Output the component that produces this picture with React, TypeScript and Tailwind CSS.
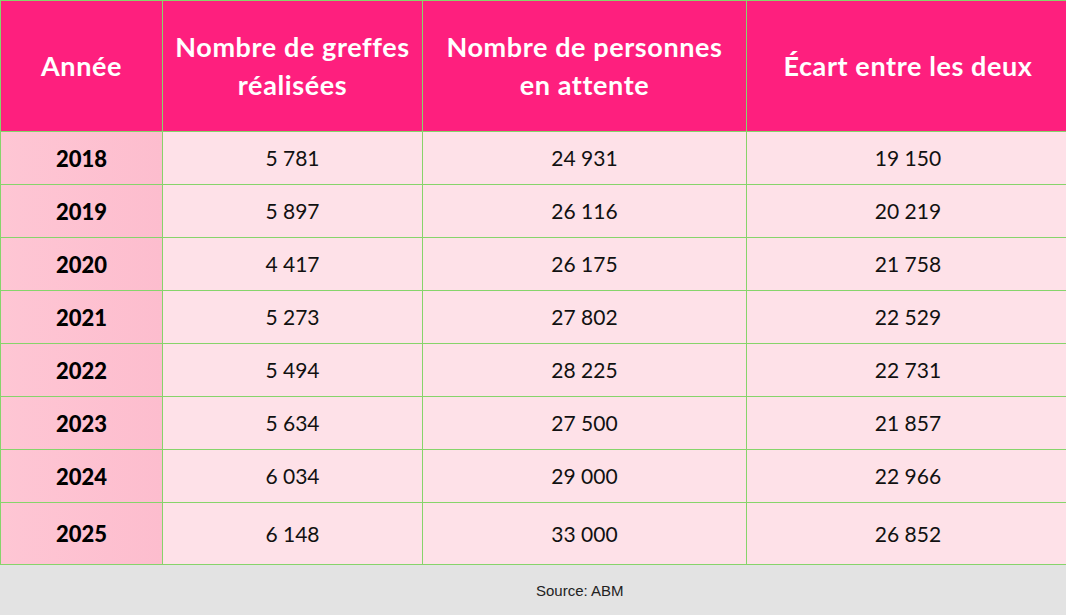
const rows = [
  { year: '2018', done: '5 781', waiting: '24 931', gap: '19 150' },
  { year: '2019', done: '5 897', waiting: '26 116', gap: '20 219' },
  { year: '2020', done: '4 417', waiting: '26 175', gap: '21 758' },
  { year: '2021', done: '5 273', waiting: '27 802', gap: '22 529' },
  { year: '2022', done: '5 494', waiting: '28 225', gap: '22 731' },
  { year: '2023', done: '5 634', waiting: '27 500', gap: '21 857' },
  { year: '2024', done: '6 034', waiting: '29 000', gap: '22 966' },
  { year: '2025', done: '6 148', waiting: '33 000', gap: '26 852' },
];

const headers = [
  'Année',
  'Nombre de greffes réalisées',
  'Nombre de personnes en attente',
  'Écart entre les deux',
];

export default function App() {
  return (
    <div className="w-[1066px] h-[615px] overflow-hidden bg-[#e3e3e3] flex flex-col">
      <div className="w-[1070px] grid grid-cols-[162px_260px_324px_1fr] border-t border-l border-[#86d46b]">
        {headers.map((h, i) => (
          <div
            key={h}
            className={`h-[131px] bg-[#fe1f7e] border-r border-b border-[#86d46b] flex items-center justify-center text-center text-white font-bold text-[27px] tracking-[0.6px] leading-[38px] font-['Lato',sans-serif] ${i === 1 ? 'px-1' : i === 2 ? 'px-5' : 'px-2'}`}
          >
            {h}
          </div>
        ))}
        {rows.map((r, idx) => {
          const h = idx === rows.length - 1 ? 'h-[62px]' : 'h-[53px]';
          return (
            <div key={r.year} className="contents">
              <div
                className={`${h} bg-gradient-to-r from-[#fec6d4] to-[#fdbdce] border-r border-b border-[#86d46b] flex items-center justify-center text-black font-black text-[22px] font-['Lato',sans-serif]`}
              >
                {r.year}
              </div>
              {[r.done, r.waiting, r.gap].map((v, j) => (
                <div
                  key={j}
                  className={`${h} bg-[#fee1e8] border-r border-b border-[#86d46b] flex items-center justify-center text-[#111] text-[21px] font-['Lato',sans-serif]`}
                >
                  {v}
                </div>
              ))}
            </div>
          );
        })}
      </div>
      <div className="flex-1 flex items-center pl-[536px] pt-[2px] text-[15px] text-[#222] font-['Liberation_Sans',Arial,sans-serif]">
        Source: ABM
      </div>
    </div>
  );
}
